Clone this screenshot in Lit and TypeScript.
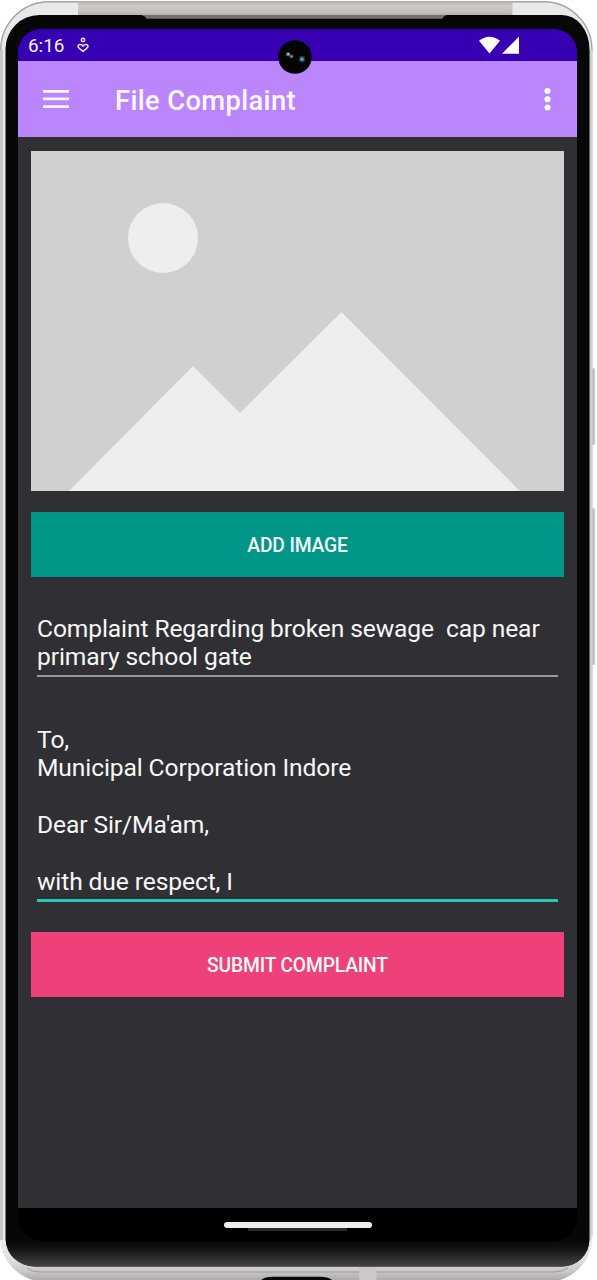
import { LitElement, html, css } from "lit";
import { customElement, property } from "lit/decorators.js";

@customElement("device-frame")
class DeviceFrame extends LitElement {
  static styles = css`
    :host { display: block; width: 597px; height: 1280px; }
    svg { display: block; }
  `;
  render() {
    return html`<svg width="597" height="1280" viewBox="0 0 597 1280">
      <defs>
        <linearGradient id="band" x1="0" y1="0" x2="0" y2="1">
          <stop offset="0" stop-color="#b3aeab" /><stop offset=".3" stop-color="#cfcbc9" />
          <stop offset=".65" stop-color="#c4c0bd" /><stop offset="1" stop-color="#a7a19d" />
        </linearGradient>
        <linearGradient id="chin" x1="0" y1="0" x2="0" y2="1">
          <stop offset="0" stop-color="#060606" /><stop offset=".3" stop-color="#111" /><stop offset="1" stop-color="#454545" />
        </linearGradient>
        <linearGradient id="base" x1="0" y1="0" x2="0" y2="1">
          <stop offset="0" stop-color="#eeeeee" /><stop offset=".5" stop-color="#dedddd" />
          <stop offset=".75" stop-color="#c9c7c7" /><stop offset="1" stop-color="#aaa5a5" />
        </linearGradient>
        <linearGradient id="key" x1="0" y1="0" x2="1" y2="0">
          <stop offset="0" stop-color="#aaa7a7" /><stop offset="1" stop-color="#d8d6d6" />
        </linearGradient>
        <clipPath id="body"><path d="M0 50A49 49 0 0 1 49 1H543A49 49 0 0 1 592.500 50V1236A46 46 0 0 1 546.500 1282H46A46 46 0 0 1 0 1236Z" /></clipPath>
      </defs>
      <rect x="592" y="368" width="3.200" height="77" rx="1.500" fill="url(#key)" />
      <rect x="592" y="508" width="3.200" height="157" rx="1.500" fill="url(#key)" />
      <g clip-path="url(#body)">
        <rect width="593" height="1282" fill="#e9e9e9" />
        <rect y="50" width="3" height="1190" fill="#c8c7c7" />
        <rect x="589.500" y="50" width="1" height="1190" fill="#aaa6a4" />
        <rect y="1240" width="593" height="42" fill="url(#base)" />
      </g>
      <path d="M.7 50A48.500 48.500 0 0 1 49 1.700H543A48.500 48.500 0 0 1 592 50" fill="none" stroke="#a2a5a5" stroke-width="1.400" />
      <path d="M592 50V1236" fill="none" stroke="#c2c0c0" stroke-width="1" />
      <path d="M27 1268Q32 1272 40 1272H553Q562 1272 568 1268" fill="none" stroke="#9d9b9b" stroke-width="1" />
      <rect x="78" y="1" width="434.500" height="17" fill="url(#band)" />
      <path d="M78 15H512V19H78Z" fill="#77706c" />
      <rect x="359" y="1266.500" width="17.500" height="14" fill="#cdc7c7" />
      <path d="M261 1280Q265 1276.700 273 1276.700H320Q328 1276.700 332 1280Z" fill="#080606" />
      <path d="M5.500 49A34 34 0 0 1 39.500 15H141Q144 15 147 18.700H442Q444.500 15 447 15H562A27.500 34 0 0 1 589.500 49V1239A27.500 27.500 0 0 1 562 1266.500H35A29.500 29.500 0 0 1 5.500 1239Z" fill="#070707" />
      <path d="M5.800 1240H589.300A27.300 26.500 0 0 1 562 1266.500H35A29.200 26.500 0 0 1 5.800 1240Z" fill="url(#chin)" />
    </svg>`;
  }
}

@customElement("status-bar")
class StatusBar extends LitElement {
  static styles = css`
    :host {
      display: flex; align-items: center; box-sizing: border-box; height: 32px;
      padding: 0 58px 0 10px; background: #3700b3; color: #f4effc;
      font: 400 18.9px/32px Roboto, sans-serif;
    }
    .clock { padding-top: 2px; }
    .alert { margin: 0 0 0 13px; }
    .signals { display: flex; gap: 2px; margin-left: auto; }
    svg { display: block; }
  `;
  render() {
    return html`<span class="clock">6:16</span>
      <svg class="alert" width="12" height="16" viewBox="0 0 12 16" fill="none" stroke="#eee6fb" stroke-width="1.500">
        <circle cx="6" cy="3" r="1.700" />
        <path d="M6 9C4.500 6.800 1 7.100 1 9.300C1 11 3.500 12.300 6 14.400C8.500 12.300 11 11 11 9.300C11 7.100 7.500 6.800 6 9Z" />
      </svg>
      <div class="signals">
        <svg width="21" height="18" viewBox="0 0 21 18"><path d="M0 4.700Q10.500-3.300 21 4.700L10.500 17.500Z" fill="#fff" /></svg>
        <svg width="17" height="18" viewBox="0 0 17 18"><path d="M17 .5V17.700H0Z" fill="#fff" /></svg>
      </div>`;
  }
}

@customElement("tool-bar")
class ToolBar extends LitElement {
  @property() heading = "";
  static styles = css`
    :host {
      display: flex; align-items: center; box-sizing: border-box; height: 76px;
      padding: 0 26px 0 25px; background: #bb86fc; color: #fdf8ff;
    }
    h1 { margin: 3px 0 0 46px; font: 500 27.4px/32px Roboto, sans-serif; letter-spacing: .33px; white-space: nowrap; }
    .more { margin-left: auto; }
    svg { display: block; }
  `;
  render() {
    return html`<svg width="26" height="18" viewBox="0 0 26 18" fill="#fdf8ff">
        <path d="M0 0H26V2.700H0ZM0 7.600H26V10.300H0ZM0 15.300H26V18H0Z" />
      </svg>
      <h1>${this.heading}</h1>
      <svg class="more" width="7" height="24" viewBox="0 0 7 24" fill="#fff">
        <circle cx="3.500" cy="4" r="3" /><circle cx="3.500" cy="12.200" r="3" /><circle cx="3.500" cy="20.400" r="3" />
      </svg>`;
  }
}

@customElement("app-root")
class AppRoot extends LitElement {
  static styles = css`
    :host { display: block; position: relative; width: 597px; height: 1280px; overflow: hidden; background: #fff; }
    .frame { position: absolute; inset: 0; }
    .phone { position: relative; box-sizing: border-box; height: 1280px; padding: 29px 20px 39px 18px; }
    .screen {
      display: flex; flex-direction: column; height: 1212px; overflow: hidden;
      border-radius: 23px; background: #000; font-family: Roboto, sans-serif;
    }
    .content {
      flex: 1; display: flex; flex-direction: column; padding: 14px 13px 0;
      background: #303034; color: #f7f7f7;
    }
    .photo { display: block; width: 533px; height: 340px; }
    button {
      flex: none; height: 65px; padding: 2px 0 0; border: 0; border-radius: 0; color: #f8f8f8;
      font: 500 19.3px/22px Roboto, sans-serif; letter-spacing: -.18px; text-transform: uppercase;
    }
    .add { margin-top: 21px; background: #009688; }
    .submit { margin-top: 30px; background: #ee4079; }
    .field { margin: 0 6px; font-size: 24.6px; line-height: 28.4px; letter-spacing: -.11px; white-space: pre; }
    .subject { height: 60px; margin-top: 38px; border-bottom: 2px solid #99979b; }
    .message { height: 173.500px; padding-top: .5px; margin-top: 48px; border-bottom: 3px solid #20cbbb; }
    .nav { flex: none; height: 33px; display: flex; flex-direction: column; align-items: center; padding-top: 14px; box-sizing: border-box; }
    .pill { width: 148px; height: 5.500px; border-radius: 3px; background: #efedf0; }
    .slot { width: 99px; height: 3px; background: #292b2b; }
    .camera { position: absolute; left: 278px; top: 40px; }
  `;
  render() {
    return html`
      <device-frame class="frame"></device-frame>
      <div class="phone">
        <div class="screen">
          <status-bar></status-bar>
          <tool-bar heading="File Complaint"></tool-bar>
          <main class="content">
            <svg class="photo" viewBox="0 0 533 340">
              <rect width="533" height="340" fill="#d0d0d0" />
              <circle cx="132" cy="87" r="35" fill="#eee" />
              <path d="M38 340L162 215L209 262L310.500 161L489 340Z" fill="#eee" />
            </svg>
            <button class="add">Add image</button>
            <div class="field subject">${"Complaint Regarding broken sewage  cap near\nprimary school gate"}</div>
            <div class="field message">${"To,\nMunicipal Corporation Indore\n\nDear Sir/Ma'am,\n\nwith due respect, I"}</div>
            <button class="submit">Submit complaint</button>
          </main>
          <div class="nav"><div class="pill"></div><div class="slot"></div></div>
        </div>
      </div>
      <svg class="camera" width="34" height="34" viewBox="0 0 34 34">
        <circle cx="17" cy="17" r="16.800" fill="#040405" />
        <circle cx="10" cy="14.300" r="2.300" fill="#4b5258" /><circle cx="13.500" cy="16.300" r="1.900" fill="#505a63" />
        <circle cx="10.300" cy="14.300" r="1.200" fill="#b0b5ba" /><circle cx="13.500" cy="16.300" r=".9" fill="#8d98a2" />
        <circle cx="24" cy="19.200" r="3.400" fill="#17313f" /><circle cx="24" cy="19.200" r="1.900" fill="#5f95b2" />
      </svg>`;
  }
}
